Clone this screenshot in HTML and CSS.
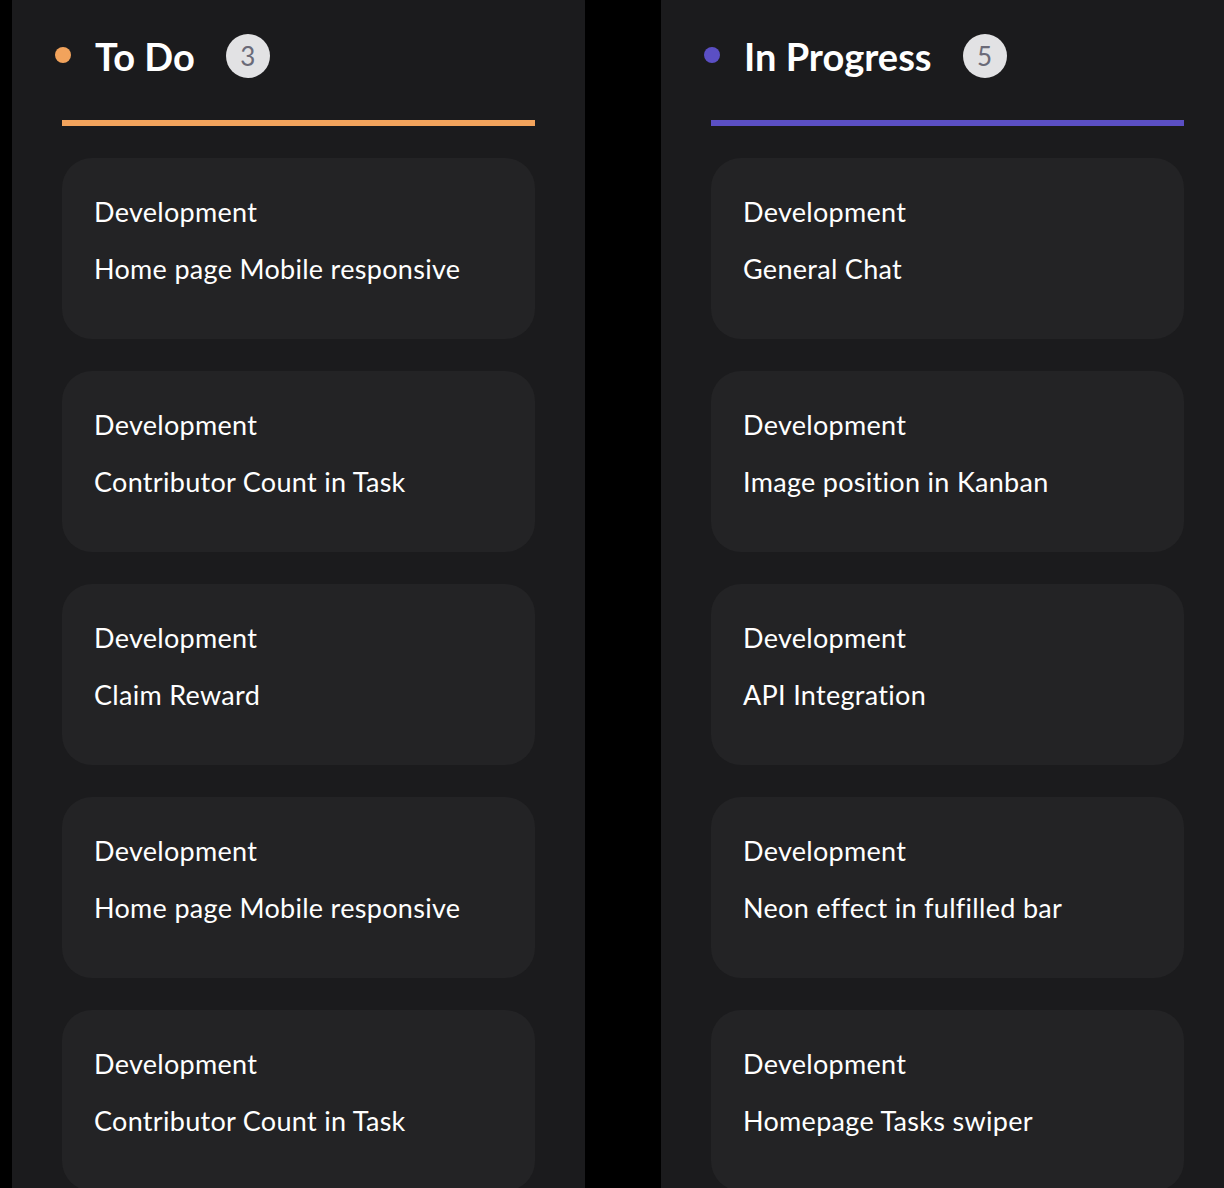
FILE: index.html
```html
<!DOCTYPE html>
<html lang="en">
<head>
<meta charset="utf-8">
<title>Kanban</title>
<link rel="stylesheet" href="styles.css">
</head>
<body>
<div class="board">
  <section class="column">
    <header class="column-header">
      <span class="dot dot-todo"></span>
      <h2 class="column-title">To Do</h2>
      <span class="badge">3</span>
    </header>
    <div class="rule rule-todo"></div>
    <div class="cards">
      <article class="card"><p class="card-tag">Development</p><p class="card-title">Home page Mobile responsive</p></article>
      <article class="card"><p class="card-tag">Development</p><p class="card-title">Contributor Count in Task</p></article>
      <article class="card"><p class="card-tag">Development</p><p class="card-title">Claim Reward</p></article>
      <article class="card"><p class="card-tag">Development</p><p class="card-title">Home page Mobile responsive</p></article>
      <article class="card"><p class="card-tag">Development</p><p class="card-title">Contributor Count in Task</p></article>
    </div>
  </section>
  <section class="column">
    <header class="column-header">
      <span class="dot dot-progress"></span>
      <h2 class="column-title">In Progress</h2>
      <span class="badge">5</span>
    </header>
    <div class="rule rule-progress"></div>
    <div class="cards">
      <article class="card"><p class="card-tag">Development</p><p class="card-title">General Chat</p></article>
      <article class="card"><p class="card-tag">Development</p><p class="card-title">Image position in Kanban</p></article>
      <article class="card"><p class="card-tag">Development</p><p class="card-title">API Integration</p></article>
      <article class="card"><p class="card-tag">Development</p><p class="card-title">Neon effect in fulfilled bar</p></article>
      <article class="card"><p class="card-tag">Development</p><p class="card-title">Homepage Tasks swiper</p></article>
    </div>
  </section>
</div>
</body>
</html>
```
FILE: styles.css
```css
* { box-sizing: border-box; }
html, body {
  margin: 0;
  padding: 0;
  background: #000;
  overflow: hidden;
  height: 1188px;
}
body {
  font-family: "Lato", "Liberation Sans", sans-serif;
  color: #fff;
}
.board {
  display: flex;
  gap: 76px;
  padding-left: 12px;
  margin-top: -20px;
  width: max-content;
}
.column {
  width: 573px;
  flex-shrink: 0;
  background: #1b1b1d;
  border-radius: 22px;
  padding: 40px 50px;
}
.column-header {
  display: flex;
  align-items: center;
  height: 72px;
  margin-left: -7px;
}
.dot {
  width: 16px;
  height: 16px;
  border-radius: 50%;
  margin-top: -2px;
  flex-shrink: 0;
}
.dot-todo { background: #f2a35c; }
.dot-progress { background: #5b4fc4; }
.column-title {
  margin: 0 0 0 24px;
  font-size: 38px;
  font-weight: 700;
  line-height: 1;
}
.badge {
  margin-left: 31px;
  width: 44px;
  height: 44px;
  border-radius: 50%;
  background: #e2e2e4;
  color: #6a6a78;
  font-size: 26px;
  display: flex;
  align-items: center;
  justify-content: center;
}
.rule {
  height: 6px;
  margin-top: 28px;
}
.rule-todo { background: #f2a35c; }
.rule-progress { background: #5b4fc4; }
.cards {
  display: flex;
  flex-direction: column;
  gap: 32px;
  margin-top: 32px;
}
.card {
  height: 181px;
  background: #232325;
  border-radius: 30px;
  padding: 36px 32px 0;
}
.card p {
  margin: 0;
  font-size: 27px;
  line-height: 36px;
  font-weight: 400;
  letter-spacing: 0.3px;
}
.card-title {
  margin-top: 21px !important;
}
```
